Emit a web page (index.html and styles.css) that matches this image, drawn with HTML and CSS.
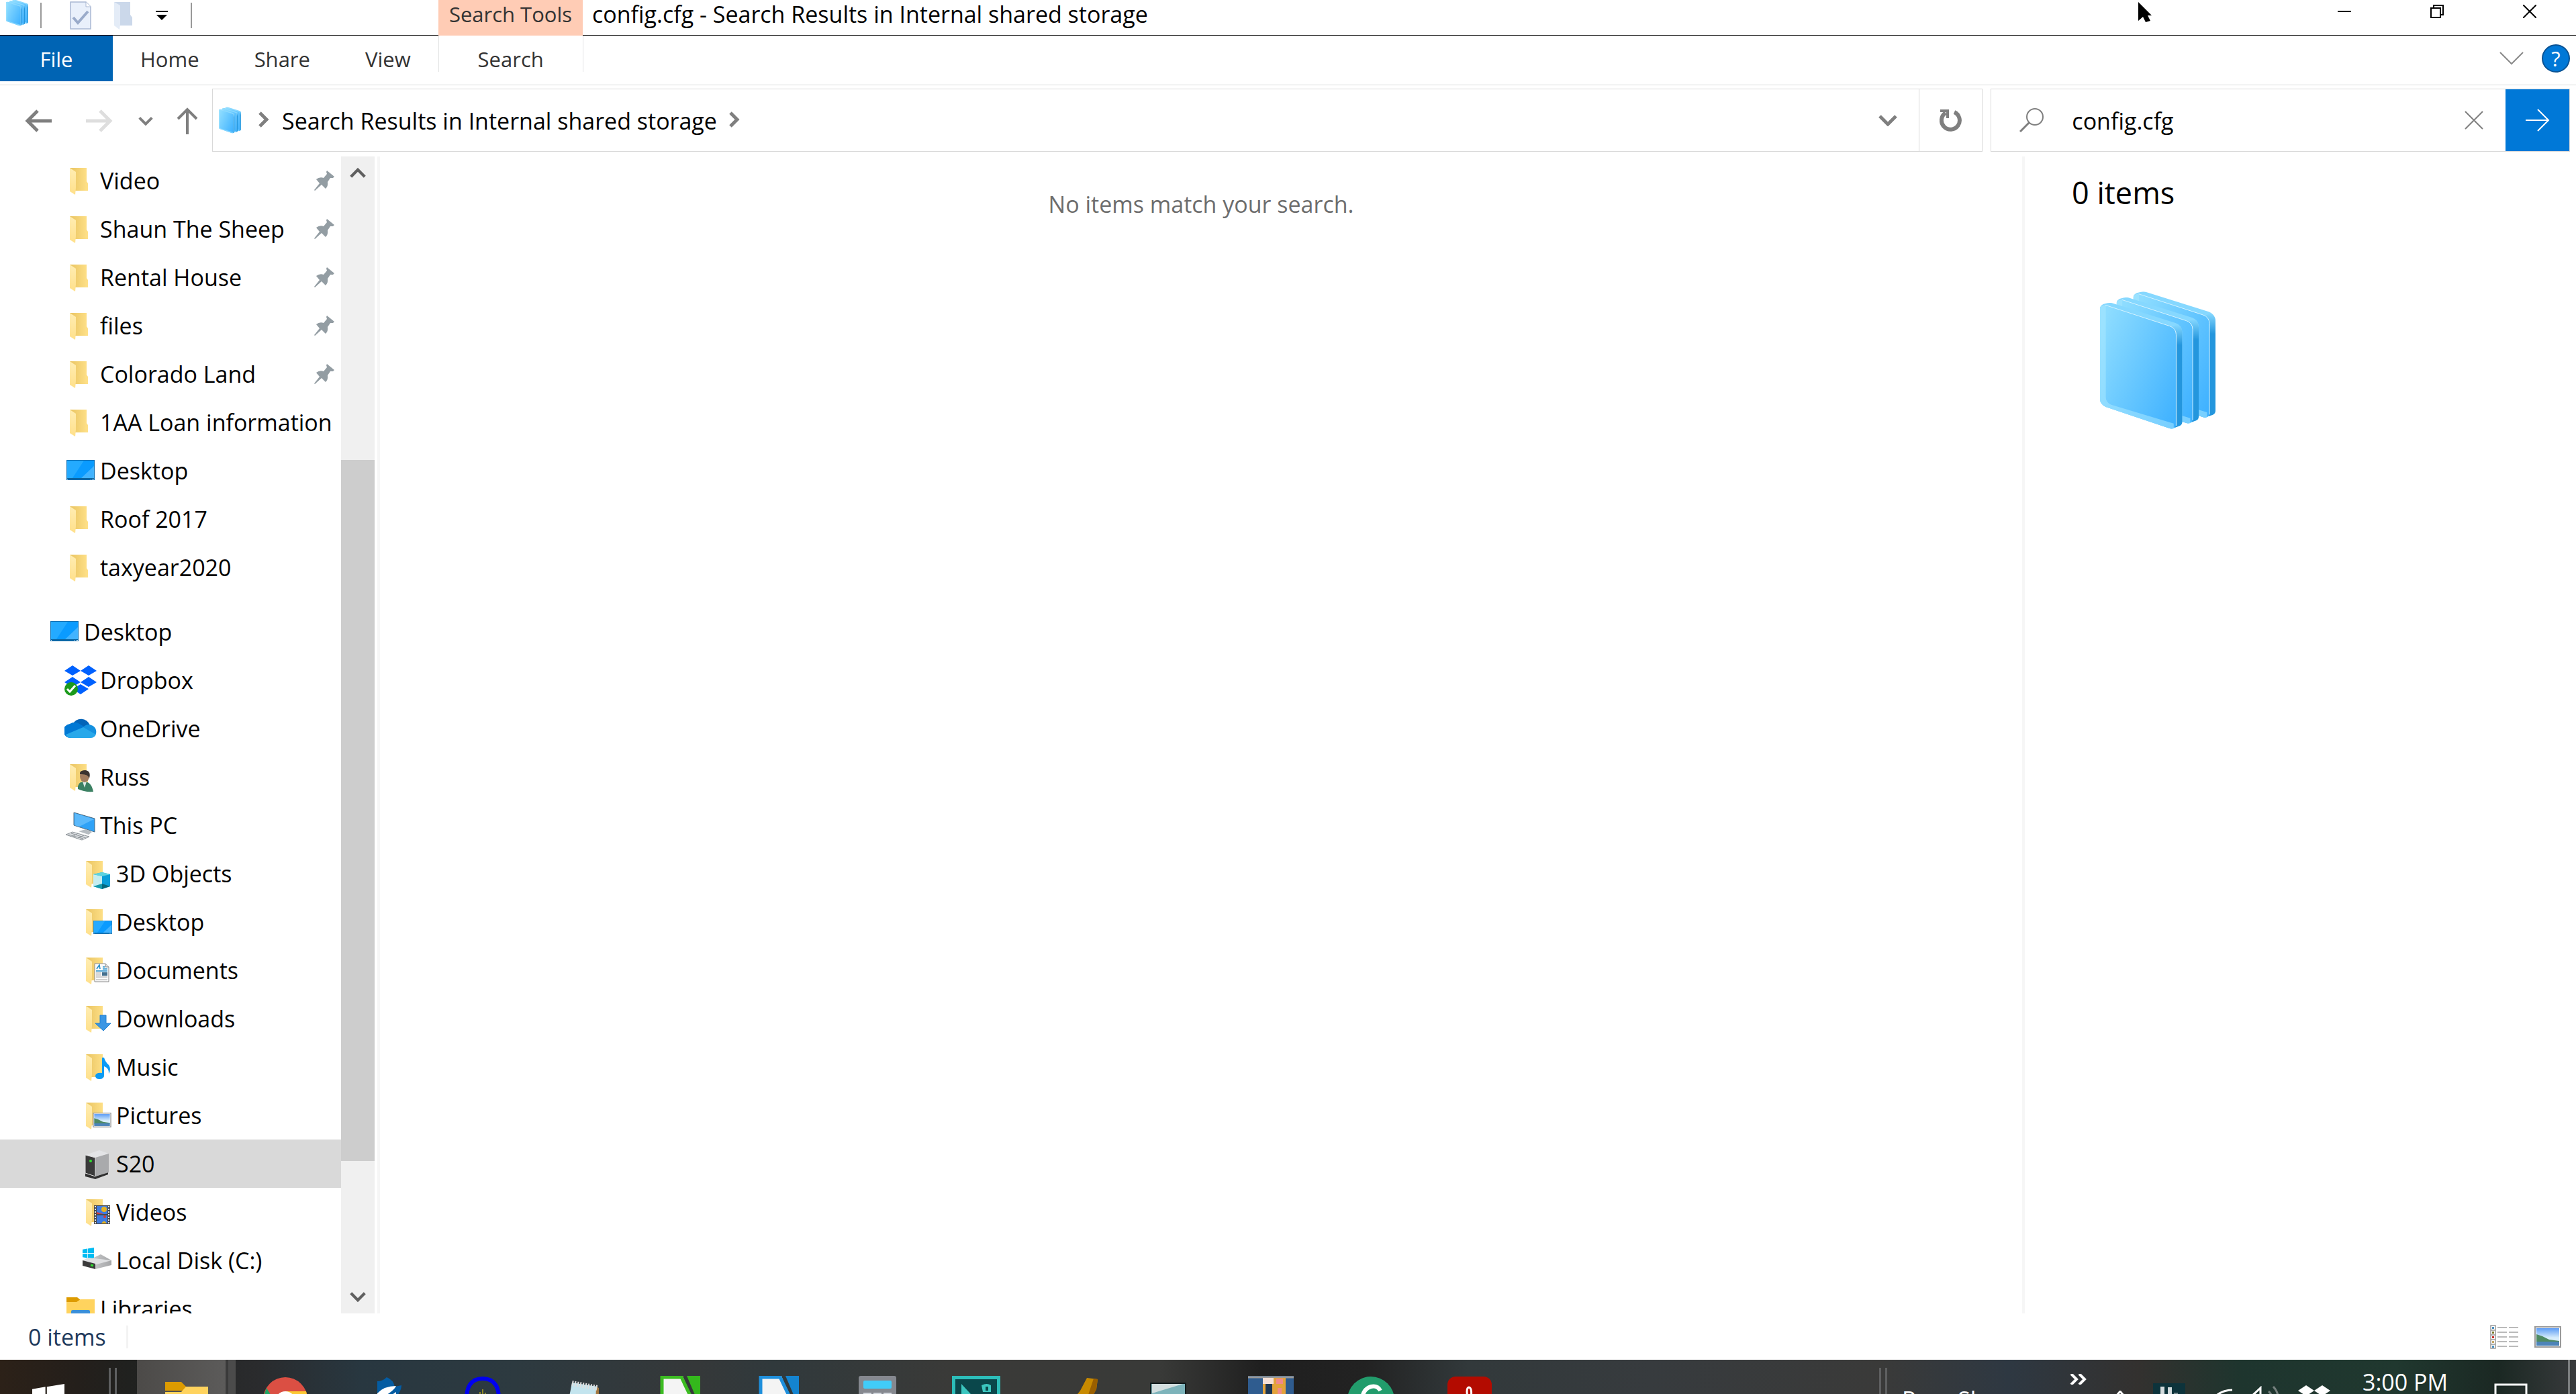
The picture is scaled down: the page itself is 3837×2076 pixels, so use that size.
FILE: index.html
```html
<!DOCTYPE html>
<html lang="en">
<head>
  <meta charset="UTF-8">
  <meta name="viewport" content="width=device-width, initial-scale=1">
  <title>config.cfg - Search Results in Internal shared storage</title>
  <link rel="stylesheet" href="styles.css">
</head>
<body>
  <!-- shared icons -->
  <svg class="sprite" aria-hidden="true">
    <defs>
      <linearGradient id="glass" x1="0" y1="0.2" x2="1" y2="0.9">
        <stop offset="0" stop-color="#8ddcff"/><stop offset="1" stop-color="#40b2ff"/>
      </linearGradient>
      <linearGradient id="glass-side" x1="0" y1="0" x2="0" y2="1">
        <stop offset="0" stop-color="#86d8ff"/><stop offset="0.2" stop-color="#2496dd"/><stop offset="1" stop-color="#2496dd"/>
      </linearGradient>
      <linearGradient id="fold-back" x1="0" y1="0" x2="1" y2="0">
        <stop offset="0" stop-color="#e9c461"/><stop offset="1" stop-color="#ffe189"/>
      </linearGradient>
      <linearGradient id="fold-flap" x1="0" y1="0" x2="0" y2="1">
        <stop offset="0" stop-color="#ffedb3"/><stop offset="1" stop-color="#ffe08a"/>
      </linearGradient>
      <linearGradient id="sky" x1="0" y1="0" x2="0" y2="1">
        <stop offset="0" stop-color="#5d9cf5"/><stop offset="0.55" stop-color="#d7edfb"/><stop offset="1" stop-color="#d7edfb"/>
      </linearGradient>
      <linearGradient id="disk" x1="0" y1="0" x2="1" y2="0">
        <stop offset="0" stop-color="#d8d9db"/><stop offset="1" stop-color="#a5a6a8"/>
      </linearGradient>
    </defs>
    <symbol id="i-sheet" viewBox="0 0 370 570">
      <path d="M0 22Q4 8 22 4L34 1Q46 -2 58 2L338 90Q366 100 368 130V530Q368 546 356 551L340 556L330 562Q324 566 312 562L26 466Q2 454 0 434Z" fill="#86d8ff"/>
      <path d="M341 134Q338 116 320 108L345 97Q368 105 368 134V532Q368 546 356 551L336 558Z" fill="url(#glass-side)"/>
      <path d="M0 24Q4 8 24 10L312 104Q340 114 341 142V545Q338 566 312 562L26 466Q2 454 0 434Z" fill="url(#glass)"/>
      <path d="M0 24Q4 8 26 12V424Q26 446 50 456L330 540V562L312 562L26 466Q2 454 0 434Z" fill="#a8e8ff" fill-opacity="0.55"/>
      <path d="M24 10L312 104Q340 114 341 142V550" fill="none" stroke="#d4f2ff" stroke-width="3"/>
    </symbol>
    <symbol id="i-results" viewBox="0 0 520 620">
      <use href="#i-sheet" x="149" y="0" width="370" height="570"/>
      <use href="#i-sheet" x="74" y="26" width="370" height="570"/>
      <use href="#i-sheet" x="0" y="50" width="370" height="570"/>
    </symbol>
    <symbol id="i-folder" viewBox="0 0 48 48">
      <path d="M8 5H33V25L35 28V39H16Z" fill="url(#fold-back)"/>
      <path d="M8 5L17 11V35L16 45L8 40Z" fill="url(#fold-flap)"/>
    </symbol>
    <symbol id="i-screen" viewBox="0 0 42 30">
      <rect x="0.5" y="0.5" width="41" height="29" fill="#0a9bff" stroke="#0d6fb5"/>
      <path d="M1 1H26L9 27H1Z" fill="#24aaff"/>
      <path d="M22 27L41 9V27Z" fill="#42b3ff"/>
      <path d="M1 28H41" stroke="#0a639f" stroke-width="2"/>
      <path d="M1 28.500h1M36 28.500h1M38 28.500h1M40 28.500h1" stroke="#fff"/>
    </symbol>
    <symbol id="i-desktop" viewBox="0 0 48 48"><use href="#i-screen" x="3" y="8" width="42" height="30"/></symbol>
    <symbol id="i-pin" viewBox="0 0 30 30">
      <path d="M19 0L30 9L28 11L24 11L20 17Q21 23 17 27L11 21L1 30L0 29L8 19L3 13Q8 9 14 11L19 5L18 2Z" fill="#939da3"/>
    </symbol>
    <symbol id="i-photo" viewBox="0 0 40 32">
      <rect x="1" y="1" width="38" height="30" fill="#fff" stroke="#9a9a9a" stroke-width="2"/>
      <rect x="3" y="3" width="34" height="26" fill="url(#sky)"/>
      <path d="M3 12L12 15L22 20L37 22V24H3Z" fill="#4f8a63"/>
      <path d="M3 23H37V29H3Z" fill="#4d84b9"/>
    </symbol>
    <symbol id="i-winlogo" viewBox="0 0 44 44">
      <path d="M0 7L18 4V21H0ZM20 4L44 0V21H20ZM0 23H18V40L0 37ZM20 23H44V44L20 40Z" fill="currentColor"/>
    </symbol>
    <symbol id="i-chev" viewBox="0 0 28 18"><path d="M2 3L14 15L26 3" fill="none" stroke="currentColor" stroke-width="5"/></symbol>
  </svg>

  <header class="titlebar">
    <div class="quick">
      <svg class="quick-app"><use href="#i-results"/></svg>
      <span class="quick-sep"></span>
      <button class="quick-btn" aria-label="Properties">
        <svg width="32" height="42" viewBox="0 0 32 42"><path d="M1 1H24L31 8V41H1Z" fill="#e9f0fb" stroke="#a9b8d3" stroke-width="1.500"/><path d="M24 1V8H31" fill="#fff" stroke="#a9b8d3"/><path d="M5 24L12 32L27 15" fill="none" stroke="#9aabca" stroke-width="4"/></svg>
      </button>
      <button class="quick-btn" aria-label="New folder">
        <svg width="28" height="42" viewBox="0 0 28 42"><path d="M0 1H24V20L27 24V36H8Z" fill="#cbd8ea"/><path d="M0 1L9 6V34L8 42L0 36Z" fill="#e4ecf7"/></svg>
      </button>
      <button class="quick-btn" aria-label="Customize">
        <svg width="18" height="14" viewBox="0 0 18 14"><path d="M0 0H18V2H0ZM1 6H17L9 14Z"/></svg>
      </button>
      <span class="quick-sep quick-end"></span>
    </div>
    <div class="tools-tab">Search Tools</div>
    <h1 class="title">config.cfg - Search Results in Internal shared storage</h1>
    <div class="win-btns">
      <button aria-label="Minimize"><svg width="20" height="20" viewBox="0 0 20 20"><path d="M0 10H20" stroke="#000" stroke-width="2"/></svg></button>
      <button aria-label="Restore"><svg width="20" height="20" viewBox="0 0 20 20"><path d="M1 5H15V19H1ZM5 5V1H19V15H15" fill="none" stroke="#000" stroke-width="2"/></svg></button>
      <button aria-label="Close"><svg width="20" height="20" viewBox="0 0 20 20"><path d="M0 0L20 20M20 0L0 20" stroke="#000" stroke-width="2"/></svg></button>
    </div>
  </header>

  <nav class="ribbon">
    <button class="file-tab">File</button>
    <button class="tab">Home</button>
    <button class="tab">Share</button>
    <button class="tab">View</button>
    <button class="tab search-tab">Search</button>
    <div class="ribbon-right">
      <button aria-label="Expand the Ribbon"><svg width="36" height="20" viewBox="0 0 36 20"><path d="M1 1L18 18L35 1" fill="none" stroke="#8a8a8a" stroke-width="2"/></svg></button>
      <button class="help" aria-label="Help">?</button>
    </div>
  </nav>

  <div class="navbar">
    <div class="nav-btns">
      <button class="nav-wide" aria-label="Back"><svg width="40" height="34" viewBox="0 0 40 34"><path d="M19 2L4 17L19 32M3 17H40" fill="none" stroke="#7f7f7f" stroke-width="5"/></svg></button>
      <button class="nav-wide" aria-label="Forward"><svg width="40" height="34" viewBox="0 0 40 34"><path d="M21 2L36 17L21 32M37 17H0" fill="none" stroke="#dedede" stroke-width="5"/></svg></button>
      <button class="nav-drop" aria-label="Recent locations"><svg width="22" height="14"><use href="#i-chev"/></svg></button>
      <button class="nav-up" aria-label="Up"><svg width="32" height="40" viewBox="0 0 32 40"><path d="M2 17L16 3L30 17M16 2V40" fill="none" stroke="#7f7f7f" stroke-width="4"/></svg></button>
    </div>
    <div class="address">
      <svg class="address-icon"><use href="#i-results"/></svg>
      <svg class="crumb" width="16" height="24" viewBox="0 0 16 24"><path d="M2 2L12 12L2 22" fill="none" stroke="#7f7f7f" stroke-width="5"/></svg>
      <a class="crumb-link" href="#">Search Results in Internal shared storage</a>
      <svg class="crumb" width="16" height="24" viewBox="0 0 16 24"><path d="M2 2L12 12L2 22" fill="none" stroke="#7f7f7f" stroke-width="5"/></svg>
      <button class="address-drop" aria-label="Previous locations"><svg width="28" height="18"><use href="#i-chev"/></svg></button>
      <button class="refresh" aria-label="Refresh"><svg width="34" height="34" viewBox="0 0 34 34"><path d="M22 5A13.500 13.500 0 1 1 9 6" fill="none" stroke="#7f7f7f" stroke-width="6"/><path d="M1 1H14V14H10V5H1Z" fill="#7f7f7f"/></svg></button>
    </div>
    <form class="search">
      <svg width="36" height="36" viewBox="0 0 36 36"><circle cx="23" cy="13" r="12" fill="none" stroke="#7f7f7f" stroke-width="2"/><path d="M15 21L1 35" stroke="#7f7f7f" stroke-width="3"/></svg>
      <input type="text" value="config.cfg" aria-label="Search">
      <button class="clear" type="button" aria-label="Clear"><svg width="28" height="28" viewBox="0 0 28 28"><path d="M1 1L27 27M27 1L1 27" stroke="#7f7f7f" stroke-width="2"/></svg></button>
      <button class="go" type="button" aria-label="Go"><svg width="36" height="34" viewBox="0 0 36 34"><path d="M0 17H34M18 1L34 17L18 33" fill="none" stroke="#fff" stroke-width="2"/></svg></button>
    </form>
  </div>

  <main class="main">
    <aside class="side">
      <ul class="tree">
        <li><a href="#"><svg><use href="#i-folder"/></svg>Video</a><svg class="pin"><use href="#i-pin"/></svg></li>
        <li><a href="#"><svg><use href="#i-folder"/></svg>Shaun The Sheep</a><svg class="pin"><use href="#i-pin"/></svg></li>
        <li><a href="#"><svg><use href="#i-folder"/></svg>Rental House</a><svg class="pin"><use href="#i-pin"/></svg></li>
        <li><a href="#"><svg><use href="#i-folder"/></svg>files</a><svg class="pin"><use href="#i-pin"/></svg></li>
        <li><a href="#"><svg><use href="#i-folder"/></svg>Colorado Land</a><svg class="pin"><use href="#i-pin"/></svg></li>
        <li><a href="#"><svg><use href="#i-folder"/></svg>1AA Loan information</a></li>
        <li><a href="#"><svg><use href="#i-desktop"/></svg>Desktop</a></li>
        <li><a href="#"><svg><use href="#i-folder"/></svg>Roof 2017</a></li>
        <li><a href="#"><svg><use href="#i-folder"/></svg>taxyear2020</a></li>
      </ul>
      <ul class="tree">
        <li class="root"><a href="#"><svg><use href="#i-desktop"/></svg>Desktop</a></li>
        <li><a href="#"><svg viewBox="0 0 48 48">
          <path d="M12 2L24 10L12 17L0 10ZM36 2L48 10L36 17L24 10ZM12 19L24 27L12 34L0 27ZM36 19L48 27L36 34L24 27ZM24 30L36 37L24 45L12 37Z" fill="#0061fe"/>
          <circle cx="10" cy="37" r="10" fill="#1c9a1c"/><path d="M4 37L8 41L16 32" fill="none" stroke="#fff" stroke-width="3"/></svg>Dropbox</a></li>
        <li><a href="#"><svg viewBox="0 0 48 48">
          <path d="M12 18A14 14 0 0 1 38 19L30 28Z" fill="#0364b8"/>
          <path d="M10 38A10 10 0 0 1 8 17Q16 12 24 18L36 25L10 38Z" fill="#0078d4"/>
          <path d="M27 23Q33 16 40 19A10 10 0 0 1 44 36L30 32Z" fill="#1490df"/>
          <path d="M2 33L28 22L47 33Q44 38 39 38H10Q4 38 2 33Z" fill="#28a8ea"/></svg>OneDrive</a></li>
        <li><a href="#"><svg viewBox="0 0 48 48"><use href="#i-folder"/>
          <path d="M20 42Q19 32 28 31Q40 30 43 46Q30 47 20 42Z" fill="#3c8163"/><path d="M27 31L30 40L33 31Z" fill="#dce9e4"/>
          <ellipse cx="30" cy="23" rx="7" ry="9" fill="#a27d5f"/><path d="M23 20Q22 14 31 14Q40 15 37 26Q35 19 23 20Z" fill="#3a3330"/></svg>Russ</a></li>
        <li><a href="#"><svg viewBox="0 0 48 48">
          <path d="M14 5L45 14V34L14 24Z" fill="#2fa2f7" stroke="#4e6b80"/><path d="M15 6L44 15L22 26L15 24Z" fill="#5bb9fb"/>
          <path d="M21 33L32 30L41 34L36 38Z" fill="#b6bcc1"/>
          <path d="M2 38L12 34L37 41L26 46Z" fill="#dcdfe2" stroke="#8e9499"/><path d="M6 38L28 44M10 36L32 43M12 41L20 36M20 43L29 39" stroke="#8e9499"/></svg>This PC</a></li>
        <li class="deep"><a href="#"><svg viewBox="0 0 48 48"><use href="#i-folder"/>
          <path d="M19 25L32 22L44 25V43L32 47L19 43Z" fill="#19b3cf"/><path d="M19 25L32 28V41L19 43Z" fill="#c5edf0"/><path d="M32 28L44 25V43L32 40Z" fill="#0b9ed8"/><path d="M19 43L32 39V47Z" fill="#159aac"/><path d="M44 43L32 39V47Z" fill="#05687e"/><path d="M19 25L32 22L44 25L32 28Z" fill="#5fd3df"/></svg>3D Objects</a></li>
        <li class="deep"><a href="#"><svg viewBox="0 0 48 48"><use href="#i-folder"/><use href="#i-screen" x="19" y="22" width="28" height="20"/></svg>Desktop</a></li>
        <li class="deep"><a href="#"><svg viewBox="0 0 48 48"><use href="#i-folder"/>
          <path d="M21 14H37L42 19V41H21Z" fill="#fafafa" stroke="#8a8a8a"/><path d="M37 14V19H42" fill="#ddd" stroke="#8a8a8a"/>
          <path d="M23 25H40M33 19H36M33 22H40M24 22L28 16L29 22" fill="none" stroke="#1c8ac9" stroke-width="1.500"/><path d="M23 28H31M23 31H31M23 34H40M23 38H40" stroke="#a5a5a5"/><path d="M32 27H40V32H32Z" fill="#44708f"/></svg>Documents</a></li>
        <li class="deep"><a href="#"><svg viewBox="0 0 48 48"><use href="#i-folder"/>
          <path d="M29 19H38V31H45L34 42L22 31H29Z" fill="#3a96e4" stroke="#1f7fd0"/></svg>Downloads</a></li>
        <li class="deep"><a href="#"><svg viewBox="0 0 48 48"><use href="#i-folder"/>
          <path d="M32 10H35Q37 17 42 21Q46 27 42 34Q43 26 35 23V36Q35 42 28 42Q22 42 22 37Q23 32 32 33Z" fill="#0a9bf5"/></svg>Music</a></li>
        <li class="deep"><a href="#"><svg viewBox="0 0 48 48"><use href="#i-folder"/><use href="#i-photo" x="18" y="20" width="28" height="22"/></svg>Pictures</a></li>
        <li class="deep selected"><a href="#"><svg viewBox="0 0 48 48">
          <path d="M7 38L22 43L41 36V40L22 47L7 43Z" fill="#303030"/><path d="M7 11L28 4L42 9L22 15Z" fill="#e3e4e6"/><path d="M22 15L42 9V37L22 43Z" fill="#a9aaac"/><path d="M7 11L22 15V43L7 38Z" fill="#3a3a3a" stroke="#ddd"/><circle cx="15" cy="20" r="2" fill="#2ee02e"/></svg>S20</a></li>
        <li class="deep"><a href="#"><svg viewBox="0 0 48 48"><use href="#i-folder"/>
          <rect x="20" y="14" width="24" height="28" fill="#4b4b4b"/><path d="M22 15V42M42 15V42" stroke="#e4e4e4" stroke-width="2" stroke-dasharray="2 2"/>
          <path d="M24 15H40V27H24ZM24 29H40V41H24Z" fill="#3e7be0"/><circle cx="35" cy="20" r="4" fill="#e8b321"/><path d="M24 24L34 27H24Z" fill="#d63b3b"/><circle cx="36" cy="31" r="2" fill="#d63b3b"/><path d="M31 41Q35 34 39 41Z" fill="#e8b321"/></svg>Videos</a></li>
        <li class="deep"><a href="#"><svg viewBox="0 0 48 48">
          <use class="win-blue" href="#i-winlogo" x="3" y="5" width="17" height="17"/>
          <path d="M3 28L30 15L46 24V31L22 37Z" fill="url(#disk)"/><path d="M3 24L12 20L46 24L20 31Z" fill="#dfe0e2"/><path d="M3 24L22 29V37L3 32Z" fill="#3b3b3b"/><path d="M15 31L19 32" stroke="#2ee02e" stroke-width="3"/></svg>Local Disk (C:)</a></li>
        <li><a href="#"><svg viewBox="0 0 48 48">
          <path d="M3 7H19L24 11V14H3Z" fill="#dd9b00"/><path d="M3 14H18L24 10H45V44H3Z" fill="#ffd35e"/><rect x="10" y="26" width="28" height="20" rx="2" fill="#3a8fd9"/></svg>Libraries</a></li>
      </ul>
    </aside>
    <div class="scroll">
      <button class="scroll-up" aria-label="Scroll up"><svg width="24" height="18"><use href="#i-chev"/></svg></button>
      <span class="scroll-before"></span>
      <span class="scroll-thumb"></span>
      <span class="scroll-after"></span>
      <button aria-label="Scroll down"><svg width="24" height="18"><use href="#i-chev"/></svg></button>
    </div>
    <section class="results">
      <p>No items match your search.</p>
    </section>
    <section class="details">
      <h2>0 items</h2>
      <svg class="details-icon"><use href="#i-results"/></svg>
    </section>
  </main>

  <footer class="status">
    <span class="count">0 items</span>
    <div class="views">
      <button aria-label="Details view"><svg width="42" height="36" viewBox="0 0 42 36">
        <path d="M1 1H8V35H1ZM1 8H8M1 15H8M1 22H8M1 29H8" fill="#fff" stroke="#9a9a9a" stroke-width="1.500"/>
        <path d="M3 3H6V6H3Z" fill="#4a90c2"/><path d="M3 10H6V13H3Z" fill="#7a7a2a"/><path d="M3 17H6V20H3Z" fill="#c8302a"/><path d="M3 24H6V27H3Z" fill="#c7a96a"/><path d="M3 31H6V34H3Z" fill="#4a90c2"/>
        <path d="M11 4H25M28 4H42M11 11H25M28 11H42M11 18H25M28 18H42M11 25H25M28 25H42M11 32H25M28 32H42" stroke="#777"/></svg></button>
      <button aria-label="Large icons"><svg width="40" height="32"><use href="#i-photo"/></svg></button>
    </div>
  </footer>

  <div class="taskbar">
    <button class="start" aria-label="Start"><svg width="48" height="48"><use href="#i-winlogo"/></svg></button>
    <span class="grip"></span>
    <div class="apps">
      <button class="app active" aria-label="File Explorer"><svg viewBox="0 0 72 72"><path d="M4 9H28L35 16V22H4Z" fill="#dd9b00"/><path d="M4 24H28L35 16H68V72H4Z" fill="#ffd35e"/></svg></button>
      <button class="app" aria-label="Chrome"><svg viewBox="0 0 72 72"><circle cx="36" cy="35" r="33" fill="#db4f43"/><path d="M8 18L24 44L20 64Q-4 48 8 18Z" fill="#20a564"/><path d="M36 23H67Q74 50 50 68Z" fill="#fcc934"/><circle cx="36" cy="38" r="15" fill="#fff"/><circle cx="36" cy="38" r="11" fill="#4a87ee"/></svg></button>
      <button class="app" aria-label="Sailing"><svg viewBox="0 0 72 72"><path d="M26 8Q34 8 40 2Q50 6 52 16L62 14Q62 24 50 36L26 50Z" fill="#045ca2"/><path d="M26 26Q36 15 54 15Q50 24 26 36ZM48 28L54 24V72H46Z" fill="#fff"/></svg></button>
      <button class="app" aria-label="Audacity"><svg viewBox="0 0 72 72"><path d="M12 40Q10 4 36 4Q62 4 60 40" fill="none" stroke="#0000f0" stroke-width="6"/><path d="M28 40V28M32 40V24M36 40V20M40 40V25M44 40V29" stroke="#8f8a28" stroke-width="2"/></svg></button>
      <button class="app" aria-label="Notepad"><svg viewBox="0 0 72 72"><path d="M22 10L60 16V72H10Z" fill="#c3e4ee"/><path d="M58 16L62 18V72H56Z" fill="#a27740"/><path d="M22 11L60 18" stroke="#dedede" stroke-width="8" stroke-dasharray="2 2"/></svg></button>
      <button class="app" aria-label="LibreOffice Calc"><svg viewBox="0 0 72 72"><path d="M9 0H40L66 72H7V2Z" fill="#f4f4f4"/><path d="M9 2H38L60 48" fill="none" stroke="#3cbc22" stroke-width="5"/><path d="M9 0V72" stroke="#3cbc22" stroke-width="5"/><path d="M46 0H66V34Q62 36 58 28Z" fill="#34b81c"/></svg></button>
      <button class="app" aria-label="LibreOffice Writer"><svg viewBox="0 0 72 72"><path d="M9 0H40L66 72H7V2Z" fill="#f4f4f4"/><path d="M9 2H38L60 48" fill="none" stroke="#1e8fdc" stroke-width="5"/><path d="M9 0V72" stroke="#1e8fdc" stroke-width="5"/><path d="M46 0H66V34Q62 36 58 28Z" fill="#1484d0"/></svg></button>
      <button class="app" aria-label="Calculator"><svg viewBox="0 0 72 72"><rect x="8" y="0" width="56" height="72" rx="3" fill="#85888f"/><rect x="15" y="7" width="42" height="12" rx="2" fill="#41ccf8"/><path d="M15 25H27V40H15ZM30 25H42V40H30ZM45 25H57V40H45Z" fill="#d0d5dc"/></svg></button>
      <button class="app" aria-label="Camtasia"><svg viewBox="0 0 72 72"><path d="M0 0H72V72H0Z" fill="#2cbdb9"/><path d="M5 5H67V72H5Z" fill="#0a474b"/><path d="M14 12L40 40H14ZM44 14Q52 10 58 14V24H46Z" fill="#3bc6bf"/><path d="M50 16H54V22H50Z" fill="#0a474b"/></svg></button>
      <button class="app" aria-label="Winamp"><svg viewBox="0 0 72 72"><path d="M54 3L70 5L68 20L56 40H30L44 22Z" fill="#c88a00"/><path d="M64 4L70 5L68 20L58 40H52Z" fill="#9a5f00"/></svg></button>
      <button class="app" aria-label="Scanner"><svg viewBox="0 0 72 72"><path d="M2 11H54V40H2Z" fill="#7db3ba" stroke="#101a1c" stroke-width="2"/><path d="M4 12H50L4 26Z" fill="#d3dedf"/><path d="M20 32H60V40H20Z" fill="#26203c"/></svg></button>
      <button class="app" aria-label="Photos"><svg viewBox="0 0 72 72"><path d="M0 0H68V72H0Z" fill="#2f5c8f"/><path d="M0 2H68" stroke="#999" stroke-width="3"/><path d="M22 3H56V72H22Z" fill="#e3a23a"/><path d="M22 3H38V12H22Z" fill="#f4dfd6"/><path d="M26 12H36V40H26Z" fill="#1e3652"/><path d="M42 4H52V12H42ZM44 18H50V34H44Z" fill="#f08a8a"/></svg></button>
      <button class="app" aria-label="Grammarly"><svg viewBox="0 0 72 72"><circle cx="36" cy="36" r="35" fill="#229c6c"/><path d="M50 22Q46 14 36 16Q22 20 23 40" fill="none" stroke="#fff" stroke-width="6"/></svg></button>
      <button class="app" aria-label="Acrobat"><svg viewBox="0 0 72 72"><rect x="3" y="1" width="66" height="71" rx="12" fill="#b30b00"/><path d="M35 40Q29 18 35 17Q41 18 37 40" fill="none" stroke="#fff" stroke-width="3"/></svg></button>
    </div>
    <div class="tray">
      <span class="grip"></span>
      <span class="toolbar-name">Russ Share</span>
      <svg class="more" width="26" height="16" viewBox="0 0 26 16"><path d="M2 0L10 8L2 16M14 0L22 8L14 16" fill="none" stroke="#fff" stroke-width="4"/></svg>
      <svg class="tray-up" width="26" height="28" viewBox="0 0 26 28"><path d="M2 14L13 1L24 14" fill="none" stroke="#fff" stroke-width="3"/></svg>
      <svg class="tray-app" width="48" height="48" viewBox="0 0 48 48"><path d="M0 0H48V48H0Z" fill="#0d333b"/><path d="M14 5V48M25 6V48" stroke="#d3dbdd" stroke-width="6"/><path d="M34 14V48" stroke="#71868a" stroke-width="6"/></svg>
      <svg class="tray-wifi" width="34" height="28" viewBox="0 0 34 28"><path d="M2 14Q14 2 30 2" fill="none" stroke="#fff" stroke-width="3"/></svg>
      <svg class="tray-sound" width="46" height="32" viewBox="0 0 46 32"><path d="M2 16L16 3V32" fill="none" stroke="#fff" stroke-width="3"/><path d="M28 8Q33 12 34 20M35 1Q42 8 43 20" fill="none" stroke="#75807d" stroke-width="3"/></svg>
      <svg class="tray-box" width="48" height="32" viewBox="0 0 48 32"><path d="M12 0L24 8L12 16L0 8ZM36 0L48 8L36 16L24 8Z" fill="#fff"/></svg>
      <time class="clock">3:00 PM</time>
      <svg class="notes" width="50" height="40" viewBox="0 0 50 40"><path d="M2 40V2H48V40" fill="none" stroke="#fff" stroke-width="3"/></svg>
    </div>
  </div>

  <svg class="cursor" width="20" height="30" viewBox="0 0 20 30"><path d="M0 0L20 20H14L18 28L11 30L7 22L0 28Z"/></svg>
</body>
</html>
```
FILE: styles.css
```css
*{
  padding: 0;
  margin: 0;
  box-sizing: border-box;
}
html{
  height: 100%;
  overflow: hidden;
}
body{
  display: flex;
  flex-direction: column;
  height: 100%;
  overflow: hidden;
  position: relative;
  background: #fff;
  color: #000;
  font-family: "Open Sans", "Noto Sans", sans-serif;
  font-size: 34px;
}
button{
  display: flex;
  align-items: center;
  justify-content: center;
  border: none;
  background: none;
  color: inherit;
  font: inherit;
}
a{
  color: inherit;
  text-decoration: none;
}
svg{
  flex: none;
  display: block;
}
.sprite{
  position: absolute;
  width: 0;
  height: 0;
}

/* title bar */
.titlebar{
  display: flex;
  flex: none;
  height: 53px;
  line-height: 42px;
  border-bottom: 1px solid #000;
}
.quick{
  display: flex;
  align-items: center;
  width: 653px;
  height: 46px;
  padding-left: 9px;
}
.quick-app{
  width: 33px;
  height: 40px;
  margin-bottom: 8px;
}
.quick-sep{
  width: 2px;
  height: 38px;
  margin-left: 18px;
  background: #999;
}
.quick-btn{
  margin-left: 34px;
}
.quick-sep + .quick-btn{
  margin-left: 42px;
}
.quick-end{
  margin-left: 34px;
}
.tools-tab{
  width: 215px;
  height: 53px;
  background: #ffccb5;
  color: #333;
  font-size: 31px;
  text-align: center;
}
.title{
  flex: 1;
  padding-left: 14px;
  font-size: 34px;
  font-weight: normal;
}
.win-btns{
  display: flex;
  height: 34px;
}
.win-btns button{
  width: 138px;
}

/* ribbon */
.ribbon{
  display: flex;
  flex: none;
  height: 74px;
  padding-bottom: 5px;
  border-bottom: 1px solid #dadbdc;
  color: #333;
  font-size: 31px;
}
.file-tab{
  width: 168px;
  padding-top: 2px;
  background: #0064b4;
  color: #fff;
}
.tab{
  padding: 2px 41px 0;
}
.search-tab{
  width: 216px;
  height: 54px;
  padding: 16px 0 0;
  border: solid #e2e3e4;
  border-width: 0 1px;
}
.ribbon-right{
  display: flex;
  align-items: center;
  gap: 27px;
  margin-left: auto;
  padding-right: 9px;
}
.help{
  width: 42px;
  height: 42px;
  border: 2px solid #0b5394;
  border-radius: 50%;
  background: #0078d7;
  color: #fff;
  font-size: 31px;
}

/* address row */
.navbar{
  display: flex;
  flex: none;
  height: 106px;
  padding: 5px 9px 7px 11px;
}
.nav-btns{
  display: flex;
  width: 305px;
  padding-top: 2px;
  color: #7f7f7f;
}
.nav-wide{
  width: 91px;
}
.nav-drop{
  width: 48px;
}
.nav-up{
  width: 75px;
}
.address{
  display: flex;
  flex: 1;
  align-items: center;
  padding-left: 9px;
  border: 1px solid #d9d9d9;
}
.address-icon{
  width: 33px;
  height: 40px;
}
.crumb{
  margin: 0 19px 2px 26px;
}
.crumb-link{
  padding-top: 2px;
}
.crumb-link + .crumb{
  margin-left: 18px;
}
.address-drop{
  width: 94px;
  height: 92px;
  margin-left: auto;
  border-right: 1px solid #d9d9d9;
  color: #7f7f7f;
}
.refresh{
  width: 93px;
  height: 92px;
}
.search{
  display: flex;
  align-items: center;
  width: 22.6%;
  margin-left: 12px;
  padding-left: 42px;
  border: 1px solid #d9d9d9;
}
.search input{
  flex: 1;
  min-width: 0;
  margin-left: 42px;
  padding-top: 2px;
  border: none;
  outline: none;
  font: inherit;
}
.clear{
  width: 94px;
  height: 92px;
}
.go{
  width: 95px;
  height: 92px;
  background: #0078d7;
}

/* folders, results, details */
.main{
  display: flex;
  flex: 1;
  min-height: 0;
}
.side{
  width: 508px;
  overflow: hidden;
}
.tree{
  list-style: none;
}
.tree + .tree{
  margin-top: 24px;
}
.tree li{
  display: flex;
  align-items: center;
  height: 72px;
  padding-left: 96px;
  white-space: nowrap;
}
.tree .root{
  padding-left: 72px;
}
.tree .deep{
  padding-left: 120px;
}
.tree .selected{
  background: #d9d9d9;
}
.tree a{
  display: flex;
  flex: 1;
  align-items: center;
  gap: 5px;
  line-height: 72px;
}
.tree a svg{
  width: 48px;
  height: 48px;
}
.tree .pin{
  width: 30px;
  height: 30px;
  margin-right: 10px;
}
.win-blue{
  color: #00bcf2;
}
.scroll{
  display: flex;
  flex-direction: column;
  width: 50px;
  background: #f0f0f0;
  color: #606060;
}
.scroll button{
  height: 50px;
}
.scroll-up svg{
  transform: rotate(180deg);
}
.scroll-before{
  flex: 25;
}
.scroll-thumb{
  flex: 65;
  background: #cdcdcd;
}
.scroll-after{
  flex: 11;
}
.results{
  flex: 1;
  margin-left: 4px;
  padding-top: 48px;
  border-left: 4px solid #f6f6f6;
  color: #6d6d6d;
  text-align: center;
}
.details{
  width: 21.5%;
  padding: 22px 70px;
  border-left: 4px solid #f6f6f6;
}
.details h2{
  font-size: 45px;
  font-weight: normal;
  line-height: 64px;
}
.details-icon{
  width: 173px;
  height: 207px;
  margin: 115px 0 0 42px;
}

/* status bar */
.status{
  display: flex;
  flex: none;
  align-items: center;
  justify-content: space-between;
  height: 69px;
  padding: 0 22px 0 42px;
  color: #1e395b;
}
.count{
  padding-right: 30px;
  border-right: 3px solid #f3f3f3;
  line-height: 34px;
}
.views{
  display: flex;
  gap: 24px;
}

/* taskbar, its lower part runs off the screen */
.taskbar{
  display: flex;
  flex: none;
  height: 51px;
  overflow: hidden;
  color: #fff;
  background: linear-gradient(to right, #2c2118 0%, #241f1b 3%, #20211f 5%, #2a2b2d 10%, #283740 14%, #2d3a40 20%, #353839 27%, #30393c 30%, #3a3a38 37%, #393a38 45%, #1f1f1f 49%, #222 53%, #32393b 57%, #373b3e 64%, #3a3a39 73%, #2e3842 78%, #33312f 83%, #1e352e 87%, #20382f 93%, #1b2823 97%, #383a3c 100%);
}
.start{
  align-items: flex-start;
  width: 144px;
  padding-top: 36px;
}
.grip{
  width: 12px;
  height: 39px;
  margin-top: 12px;
  border: solid #5e5f60;
  border-width: 0 3px;
}
.start + .grip{
  margin-left: 18px;
}
.apps{
  display: flex;
  margin-left: 30px;
}
.app{
  align-items: flex-start;
  width: 147px;
  height: 51px;
  padding-top: 24px;
}
.app svg{
  width: 72px;
  height: 72px;
}
.active{
  background: linear-gradient(to right, #4c4a48, #5c5b5a 132px, #3a3a3a 132px, #3a3a3a 136px, #4b4b4b 136px);
}
.tray{
  display: flex;
  align-items: flex-start;
  margin-left: auto;
  margin-right: 9px;
  padding-right: 60px;
  border-right: 3px solid #7c7f80;
}
.toolbar-name{
  width: 250px;
  margin-left: 22px;
  padding-top: 36px;
}
.more{
  margin-top: 21px;
}
.tray-up{
  margin: 46px 0 0 36px;
}
.tray-app{
  margin: 35px 0 0 36px;
}
.tray-wifi{
  margin: 43px 0 0 40px;
}
.tray-sound{
  margin: 39px 0 0 22px;
}
.tray-box{
  margin: 38px 0 0 26px;
}
.clock{
  width: 196px;
  margin-left: 48px;
  padding-top: 10px;
  line-height: 46px;
}
.notes{
  margin-top: 35px;
}
.cursor{
  position: absolute;
  left: 83%;
  top: 3px;
}
```
